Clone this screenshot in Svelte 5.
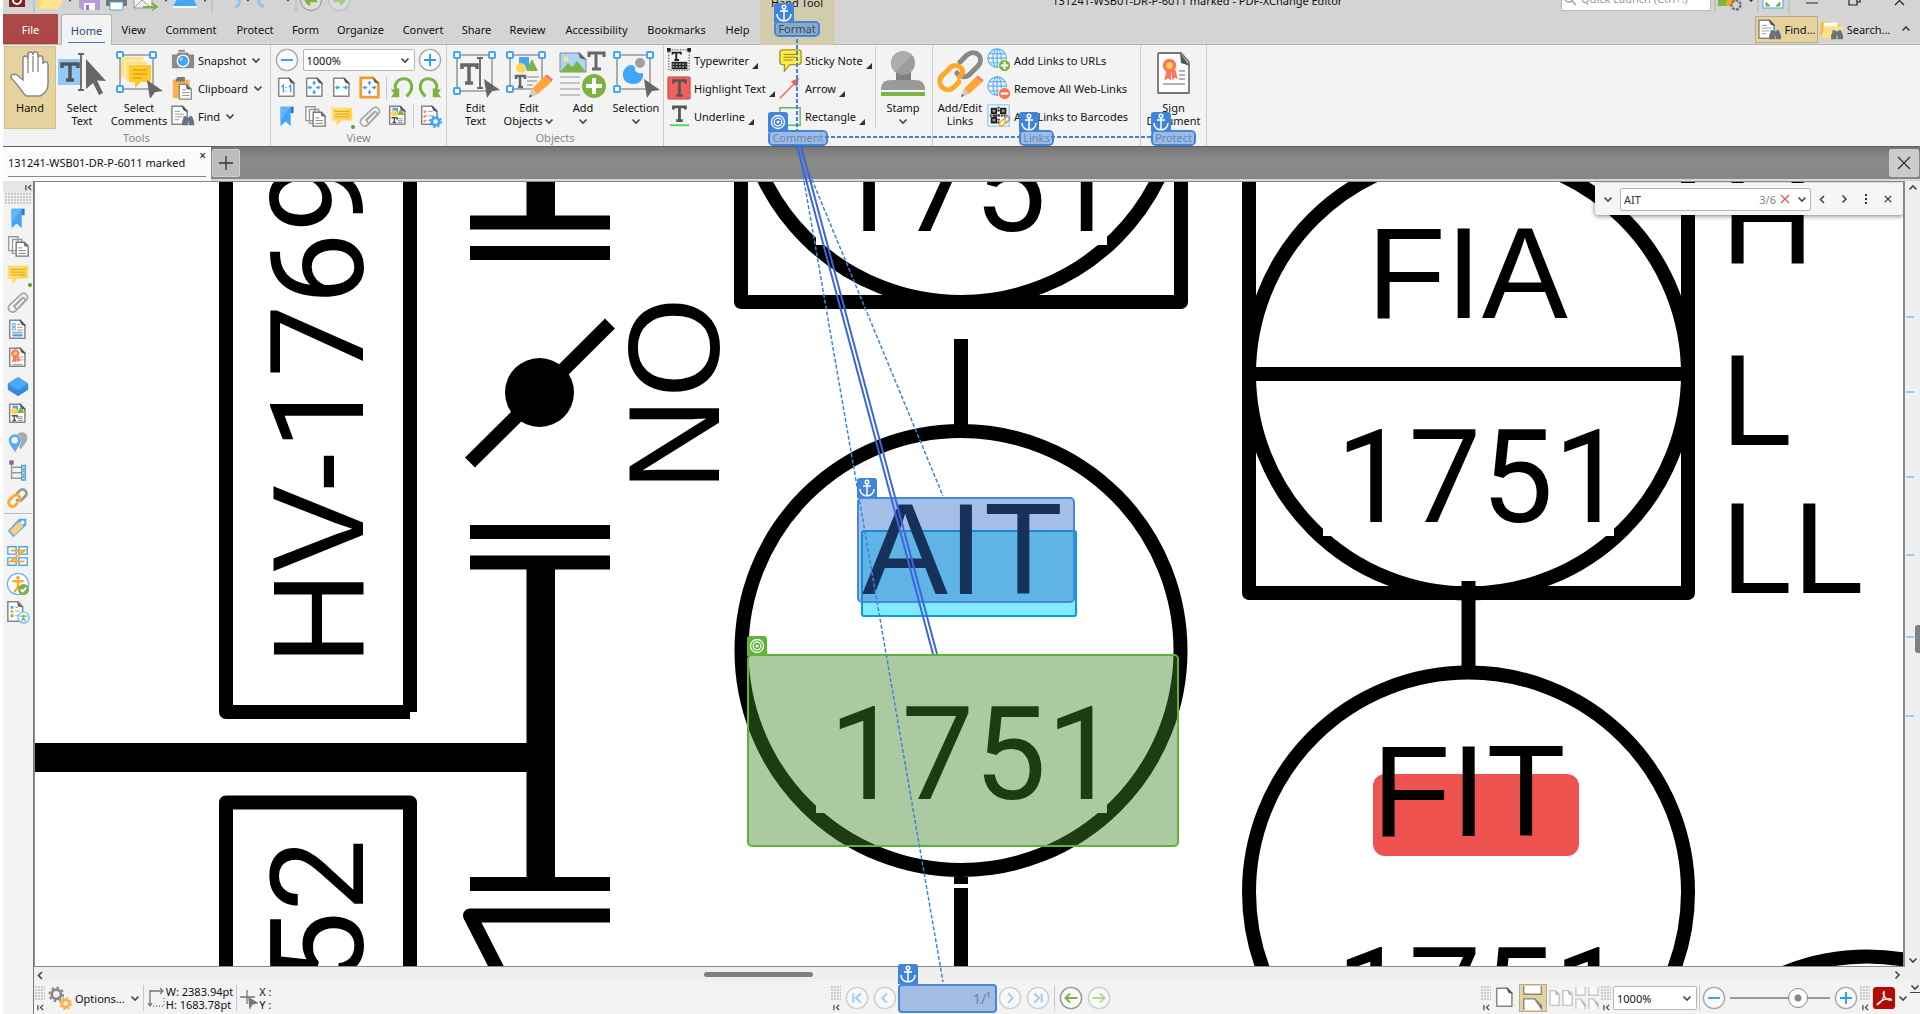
<script>
  const tabs = ['View', 'Comment', 'Protect', 'Form', 'Organize', 'Convert', 'Share', 'Review', 'Accessibility', 'Bookmarks', 'Help'];
  const panes = [
    ['bookmark', 'Bookmarks'], ['pages', 'Thumbnails'], ['note', 'Comments'], ['clip', 'Attachments'],
    ['fields', 'Fields'], ['sign', 'Signatures'], ['layers', 'Layers'], ['content', 'Content'],
    ['pins', 'Destinations'], ['tree', 'Structure'], ['link', 'Links']
  ];
  const accessPanes = [['tag', 'Tags'], ['order', 'Order'], ['person', 'Accessibility check'], ['report', 'Report']];
  const ticks = [317, 392, 477, 555, 637, 716];
  let zoom = $state('1000%');
  let slider = $state(72);
  let query = $state('AIT');
</script>

{#snippet sheet()}
  <g><path d="M4 2.5h11.5l5 5V22H4z" fill="#fff" stroke="#858585" stroke-width="1.6" stroke-linejoin="round" /><path d="M15 2l6 6-4-1z" fill="#555" stroke="#555" /></g>
{/snippet}

{#snippet binoculars()}
  <g fill="#6b7178"><path d="M14 14h4v9h-6v-4zM19 14h4l2 5v4h-6z" /><path d="M16 15h5v4h-5z" /><path d="M13.500 13h3v2h-3zM20 13h3v2h-3z" fill="#3e8fd0" /></g>
{/snippet}

{#snippet cursor(x, y)}
  <path transform="translate({x} {y})" d="M0 0l16 11-7 1 -1 0-5 7z" fill="#666" />
{/snippet}

{#snippet handles(x2, y2)}
  <g fill="none"><path d="M5 5H{x2}V{y2}H5z" stroke="#999" stroke-width="1.6" />
    <g fill="#fff" stroke="#42a5f5" stroke-width="2"><rect x="2" y="2" width="6" height="6" rx="1" /><rect x={x2 - 3} y="2" width="6" height="6" rx="1" /><rect x="2" y={y2 - 3} width="6" height="6" rx="1" /></g></g>
{/snippet}

{#snippet chain()}
  <g fill="none" stroke-width="3" stroke-linecap="round"><path d="M12 7l3-3a4.200 4.200 0 0 1 6 6l-4 4a4.200 4.200 0 0 1-5 .5" stroke="#999" /><path d="M12 18l-2 2a4.200 4.200 0 0 1-6-6l4-4a4.200 4.200 0 0 1 6 0 4 4 0 0 1 0 5" stroke="#ffa726" /></g>
{/snippet}

{#snippet pencil()}
  <g><path d="M0 20l3-8L14 1l6 5L8 17z" fill="#ffa53a" /><path d="M14 1l2-1.500 5.500 4.500L20 6z" fill="#ff7058" /><path d="M0 20l3-8 5 5z" fill="#d7ccc0" /><path d="M0 20l1-3 2 2z" fill="#666" /></g>
{/snippet}

{#snippet rosette()}
  <g><path d="M9 12l-1.500 7 2.500-1.500 2 1.500v-7zM12 12l1 7 1.500-2 2 1-1.500-6z" fill="#ff7558" /><circle cx="11" cy="9" r="4.500" fill="#ff7558" /><circle cx="11" cy="9" r="2.200" fill="#ffd54f" /></g>
{/snippet}

{#snippet globe()}
  <g fill="none" stroke="#5cb0f2" stroke-width="1.300"><circle cx="11" cy="11" r="10" /><ellipse cx="11" cy="11" rx="4.500" ry="10" /><path d="M11 1v20M1 11h20M2.500 6h17M2.500 16h17" /></g>
{/snippet}

{#snippet icon(name)}
  <svg class="ic" viewBox="0 0 26 26" aria-hidden="true">
    {#if name === 'bookmark'}
      <path d="M6 3h14v5h-3v16l-5.500-5L6 24z" fill="#42a5f5" /><path d="M6 18V3h11z" fill="#64b5f6" /><path d="M17 3h3v7h-3z" fill="#2b7fc9" />
    {:else if name === 'pages'}
      <g fill="#fff" stroke="#999" stroke-width="1.500"><path d="M3 18V3h10v15zM7 21V6h10v15z" /><path d="M11 9h9l4 4v11H11z" stroke="#777" /></g><path d="M13.500 15h4m-4 3h8m-8 3h8" stroke="#777" /><path d="M19 9l5 5-4-1z" fill="#555" />
    {:else if name === 'note'}
      <path d="M2 4h22v14H12l-5 6v-6H2z" fill="#ffd54f" /><path d="M2 18V4h20L12 18z" fill="#ffe07a" opacity=".7" /><path d="M5 8h16M5 11h16M5 14h16" stroke="#e0a92c" stroke-width="1.300" />
    {:else if name === 'clip'}
      <path d="M8 17L17 8c2-2 5 1 3 3L11 21c-5 5-11-1-7-6L16 4c4-4 10 2 6 6l-8 8c-3 3-6 0-3-3l7-7" fill="none" stroke="#a6a6a6" stroke-width="1.800" transform="translate(0 1)" />
    {:else if name === 'fields'}
      {@render sheet()}<path d="M7 6h3v3H7zM7 10h3v3H7z" fill="#fff" stroke="#42a5f5" /><path d="M12 7h3m-3 3h6m-6 3h6M7 15.500h11M7 17.500h11" stroke="#888" /><path d="M7 19h11" stroke="#42a5f5" stroke-width="2" />
    {:else if name === 'sign'}
      {@render sheet()}<g transform="translate(-1 -1)">{@render rosette()}</g><path d="M15 12h4m-4 3h4M7 20h11" stroke="#999" />
    {:else if name === 'layers'}
      <path d="M2 10v7l11 7 11-7v-7z" fill="#3993e0" /><path d="M13 3l11 7-11 7L2 10z" fill="#4dabf5" /><path d="M2 13l11 7 11-7M2 16l11 6 11-6" fill="none" stroke="#2d83cf" />
    {:else if name === 'content'}
      {@render sheet()}<path d="M7 4h6v6H7z" fill="#42a5f5" /><path d="M12 12l4-7 4 7z" fill="#7cb342" /><circle cx="9" cy="10" r="3.500" fill="#ffd54f" /><path d="M6 15h6v2m-3-2v5m-2 0h4" stroke="#555" stroke-width="1.600" fill="none" /><path d="M13 16h5m-5 2h5m-5 2h5" stroke="#888" />
    {:else if name === 'pins'}
      <path d="M12 5c4-5 12-2 11 4 0 4-5 9-7 12l-2-3c3-4 3-9 1-11z" fill="#aaa" /><path d="M10 24C7 19 3 15 3 11a6.500 6.500 0 0 1 13 0c0 4-4 8-6 13z" fill="#55acf3" /><circle cx="9.500" cy="11" r="3.500" fill="#f3f3f3" />
    {:else if name === 'tree'}
      <path d="M6 5v17h11M6 16h11M6 10h11" fill="none" stroke="#999" stroke-width="1.500" /><path d="M4 3h4v4H4z" fill="#e53935" stroke="#42a5f5" /><g fill="#ffd54f" stroke="#42a5f5" stroke-width="1.500"><path d="M17 8h4v4h-4zM17 14h4v4h-4zM17 20h4v4h-4z" /></g>
    {:else if name === 'link'}
      <g transform="translate(0 1)">{@render chain()}</g>
    {:else if name === 'tag'}
      <path d="M22 3h-8L2 16l6 7L22 10z" fill="#55acf3" /><path d="M14 6l5 5-10 10-5-5z" fill="#ffcc80" /><circle cx="18" cy="7" r="2" fill="#fff" />
    {:else if name === 'order'}
      <g fill="#fff" stroke="#42a5f5" stroke-width="1.500"><path d="M2 3h9v8H2zM14 3h9v8h-9zM2 15h9v8H2zM14 15h9v8h-9z" /></g><path d="M5 7h15L5 19h15" fill="none" stroke="#ffa726" stroke-width="2.200" />
    {:else if name === 'person'}
      <circle cx="13" cy="13" r="11.500" fill="#fff" stroke="#64b5f6" stroke-width="1.300" /><circle cx="13" cy="6" r="2" fill="#ffa726" /><path d="M7 10h12M13 10v6l-4 6M13 15l3 5" stroke="#ffa726" stroke-width="2.500" fill="none" /><circle cx="19" cy="19" r="6" fill="#7cb342" /><path d="M16 19l2 2 4-4" fill="none" stroke="#fff" stroke-width="2" />
    {:else if name === 'report'}
      <path d="M2 2h11l5 5v16H2z" fill="#fff" stroke="#858585" stroke-width="1.600" /><path d="M12 2l6 6-5-1z" fill="#555" /><path d="M5 8h3" stroke="#42a5f5" stroke-width="3" /><path d="M5 12.500h3" stroke="#ffa726" stroke-width="3" /><path d="M5 17h3" stroke="#7cb342" stroke-width="3" /><path d="M10 8h3m-3 4h5m-5 5h3" stroke="#999" /><circle cx="19" cy="19" r="6" fill="#fff" stroke="#64b5f6" stroke-width="1.300" /><path d="M15 17.500h8M19 16v3l-2 4m2-4l2 4" stroke="#66bb6a" stroke-width="1.500" fill="none" />
    {:else if name === 'camera'}
      <path d="M1 7h5l2-2h10l2 2h5v15H1z" fill="#8a8a8a" /><path d="M8 2h7v2H8z" fill="#8a8a8a" /><circle cx="13" cy="14" r="7" fill="#fff" /><circle cx="13" cy="14" r="5.500" fill="#42a5f5" /><circle cx="11" cy="12" r="2" fill="#8fcbfa" />
    {:else if name === 'paste'}
      <path d="M2 4h18v20H2z" fill="#ffb04d" /><path d="M7 1h8v5H5V4z" fill="#777" /><path d="M9 9h8l5 5v11H9z" fill="#fff" stroke="#888" stroke-width="1.400" /><path d="M12 15h4m-4 3h8m-8 3h8" stroke="#888" /><path d="M16 9l6 6-5-1z" fill="#555" />
    {:else if name === 'find'}
      <g transform="translate(-3 0)">{@render sheet()}</g><path d="M4 8h6M4 11h10M4 14h8M4 17h5" stroke="#999" />{@render binoculars()}
    {:else if name === 'folder'}
      <path d="M1 4h9l2 3h10v15H1z" fill="#f9bd2c" /><path d="M4 5h15v8H4z" fill="#fff" /><path d="M1 22L5 9h21l-4 13z" fill="#ffe082" />{@render binoculars()}
    {:else if name === 'minus'}
      <circle cx="13" cy="13" r="11.500" fill="#fafafa" stroke="#a8a8a8" stroke-width="1.500" /><path d="M6.500 13h13" stroke="#2f9bf0" stroke-width="2" />
    {:else if name === 'plus'}
      <circle cx="13" cy="13" r="11.500" fill="#fafafa" stroke="#a8a8a8" stroke-width="1.500" /><path d="M6.500 13h13M13 6.500v13" stroke="#2f9bf0" stroke-width="2" />
    {:else if name === 'actual'}
      {@render sheet()}<path d="M7 12l2-2v8M15 12l2-2v8M12 12v1m0 3v1" stroke="#42a5f5" stroke-width="1.500" fill="none" />
    {:else if name === 'fitpage'}
      {@render sheet()}<path d="M12 6v4m0 5v4M6 12.500h4m4 0h4M10.500 8L12 6l1.500 2M10.500 17l1.500 2 1.500-2M8 11l-2 1.500L8 14M16 11l2 1.500-2 1.500" stroke="#42a5f5" stroke-width="1.500" fill="none" />
    {:else if name === 'fitwidth'}
      {@render sheet()}<path d="M6.500 12.500H11m3 0h4.500M8.500 10.500l-2 2 2 2M16.500 10.500l2 2-2 2" stroke="#42a5f5" stroke-width="1.500" fill="none" />
    {:else if name === 'fitvisible'}
      <path d="M3 2h13l6 6v15H3z" fill="#fff" stroke="#f59a2c" stroke-width="3" /><path d="M16 1l7 7-5-1z" fill="#555" /><path d="M12.500 6v4m0 5v4M6 12.500h4m5 0h4M11 8l1.500-2L14 8M11 17l1.500 2 1.500-2M8 11l-2 1.500L8 14M17 11l2 1.500-2 1.500" stroke="#42a5f5" stroke-width="1.500" fill="none" />
    {:else if name === 'rotleft'}
      <path d="M8 20C2 9 9 3 15 3c9 0 12 11 3 19" fill="none" stroke="#7cb342" stroke-width="3.400" /><path d="M1 14l4 1 5-2v10H1l3-4z" fill="#7cb342" />
    {:else if name === 'rotright'}
      <path d="M18 20C24 9 17 3 11 3 2 3-1 14 8 22" fill="none" stroke="#7cb342" stroke-width="3.400" /><path d="M25 14l-4 1-5-2v10h9l-3-4z" fill="#7cb342" />
    {:else if name === 'tasks'}
      {@render sheet()}<path d="M6 8l1 1 2-2M6 13l1 1 2-2M6 18l1 1 2-2" stroke="#ff7058" fill="none" stroke-width="1.500" /><path d="M11 8h5m-5 5h5m-5 5h3" stroke="#999" /><circle cx="19" cy="19" r="4" fill="#fff" stroke="#42a5f5" stroke-width="3" /><circle cx="19" cy="19" r="6" fill="none" stroke="#42a5f5" stroke-width="2" stroke-dasharray="2.400 2.300" />
    {:else if name === 'typewriter'}
      <path d="M2 2h22v22H2z" fill="none" stroke="#333" stroke-dasharray="1.500 1.500" /><path d="M0 0h4v4H0zM22 0h4v4h-4z" fill="#222" /><path d="M6 7V5h9v2M10 5v8M8 13h5" stroke="#222" stroke-width="2" fill="none" /><path d="M5 15h17v8H5z" fill="#222" /><path d="M6 17.500h15M6 20.500h15" stroke="#fff" stroke-dasharray="2 1.500" />
    {:else if name === 'hltext'}
      <rect x="1" y="1" width="24" height="24" rx="1" fill="#f0615c" stroke="#c93d3b" /><path d="M7 8V5h13v3M13.500 5v16M10 21h7" fill="none" stroke="#555" stroke-width="3" />
    {:else if name === 'underline'}
      <path d="M7 6V3h13v3M13.500 3v15M10 18h7" fill="none" stroke="#555" stroke-width="3" /><path d="M3 23h21" stroke="#4ade50" stroke-width="2" />
    {:else if name === 'sticky'}
      <path d="M5 2h17a3 3 0 0 1 3 3v10a3 3 0 0 1-3 3h-9l-6 7v-7H5a3 3 0 0 1-3-3V5a3 3 0 0 1 3-3z" fill="#fdec45" stroke="#a99529" stroke-width="1.500" /><path d="M6 7h14M6 10h14M6 13h10" stroke="#8c7a1c" />
    {:else if name === 'arrow'}
      <path d="M2 24L20 6" stroke="#f0615c" stroke-width="1.500" /><path d="M14 6l9-4-3 10z" fill="#f0615c" />
    {:else if name === 'rect'}
      <path d="M2 4h22v19H2z" fill="none" stroke="#67b168" stroke-width="1.500" />
    {:else if name === 'addlink'}
      {@render globe()}<circle cx="19" cy="19" r="6.500" fill="#7cb342" stroke="#f3f3f3" /><path d="M15 19h8M19 15v8" stroke="#fff" stroke-width="2.200" />
    {:else if name === 'rmlink'}
      {@render globe()}<circle cx="19" cy="19" r="6.500" fill="#ff7250" stroke="#f3f3f3" /><path d="M15 19h8" stroke="#fff" stroke-width="2.400" />
    {:else if name === 'qr'}
      <path d="M1 1h23v23H1z" fill="#fff" stroke="#90caf9" stroke-width="1.500" /><path d="M5 5h5v5H5zM15 5h5v5h-5zM5 15h5v5H5z" fill="#999" stroke="#222" stroke-width="2" /><path d="M12.500 3v6m0 2v3M3 12.500h19M12.500 16v6M8 13h3" stroke="#333" stroke-width="2.500" stroke-dasharray="2 1" /><g transform="translate(12 12) scale(.56)">{@render chain()}</g>
    {:else if name === 'gears'}
      <g fill="none"><circle cx="9" cy="9" r="5" stroke="#888" stroke-width="3" /><circle cx="9" cy="9" r="7.500" stroke="#888" stroke-width="2" stroke-dasharray="2.900 3" /><circle cx="19" cy="19" r="4" stroke="#ffb14d" stroke-width="3" /><circle cx="19" cy="19" r="6" stroke="#ffb14d" stroke-width="2" stroke-dasharray="2.400 2.300" /></g>
    {:else if name === 'single'}
      {@render sheet()}
    {:else if name === 'contin'}
      <path d="M3 0v9h19V0M3 26V14h12l7 7v5" fill="#fff" stroke="#858585" stroke-width="1.500" /><path d="M14 14l8 8v3z" fill="#555" />
    {:else if name === 'two'}
      <path d="M1 5h6l4 4v12H1zM15 5h6l4 4v12H15z" fill="#fff" stroke="#c4c4c4" stroke-width="1.500" /><path d="M7 5l4 5-4-1zM21 5l4 5-4-1z" fill="#aaa" />
    {:else if name === 'four'}
      <path d="M1 1v9h10V1M15 1v9h10V1M1 25V14h5l5 5v6M15 25V14h5l5 5v6" fill="#fafafa" stroke="#c9c9c9" stroke-width="1.500" /><path d="M5 14l6 6v3zM19 14l6 6v3z" fill="#aaa" />
    {:else if name === 'first' || name === 'prev' || name === 'next' || name === 'last' || name === 'back' || name === 'forward'}
      <circle cx="13" cy="13" r="11.500" fill="#f8f8f8" stroke={name === 'back' ? '#999' : '#cfcfcf'} stroke-width="1.600" />
      {#if name === 'first'}<path d="M9 8v10M17 8l-5 5 5 5" fill="none" stroke="#9dcef8" stroke-width="2.200" />
      {:else if name === 'prev'}<path d="M15 8l-5 5 5 5" fill="none" stroke="#9dcef8" stroke-width="2.200" />
      {:else if name === 'next'}<path d="M11 8l5 5-5 5" fill="none" stroke="#9dcef8" stroke-width="2.200" />
      {:else if name === 'last'}<path d="M17 8v10M9 8l5 5-5 5" fill="none" stroke="#9dcef8" stroke-width="2.200" />
      {:else if name === 'back'}<path d="M20 13H7m5-5l-5 5 5 5" fill="none" stroke="#7cb342" stroke-width="2.200" />
      {:else}<path d="M6 13h13m-5-5l5 5-5 5" fill="none" stroke="#b5d697" stroke-width="2.200" />{/if}
    {:else if name === 'acrobat'}
      <rect x="1" y="1" width="24" height="24" rx="4" fill="#b30b00" /><path d="M5 20c5-1 9-8 8-14-3 2 3 11 8 9-2-3-12 0-15 5z" fill="none" stroke="#fff" stroke-width="1.500" />
    {/if}
  </svg>
{/snippet}

{#snippet big(name)}
  <svg class="bigic" viewBox="0 0 48 48" aria-hidden="true">
    {#if name === 'hand'}
      <path d="M17 46c-4-4-10-14-15-18-1-3 3-5 6-3l6 5V9c0-4 5-4 5 0V5c0-4 5-4 5 0v-1c0-3 5-3 5 1v3c0-3 5-3 5 1v5c0-3 5-3 5 1v19c0 6-4 10-8 12z" transform="translate(3 0)" fill="#fff" stroke="#888" stroke-width="1.500" /><path d="M22 9v14M27 6v16M32 8v14" stroke="#888" stroke-width="1.300" />
    {:else if name === 'seltext'}
      <rect x="0" y="9" width="24" height="26" fill="#90caf9" /><path d="M4 18v-4h16v4M12 14v16M8 30h8" stroke="#555" stroke-width="3.500" fill="none" /><path d="M23 4v36M20 4h6M20 40h6" stroke="#666" stroke-width="1.800" /><path d="M28 9l20 22-9-.5L45 43l-4 2-6-12-7 6z" fill="#666" />
    {:else if name === 'selcom'}
      {@render handles(38, 39)}<path d="M6 7h22v4H11v16H6z" fill="#ffe082" /><path d="M10 11h22v4H15v16h-5z" fill="#ffe082" stroke="#f3f3f3" /><path d="M14 15h22v17H26l-6 6v-6h-6z" fill="#ffca28" /><path d="M18 20h14M18 24h14M18 28h9" stroke="#c99413" />{@render cursor(32, 30)}
    {:else if name === 'edittext'}
      {@render handles(40, 41)}<path d="M10 19v-4h15v4M17 15v18M13 33h8" stroke="#666" stroke-width="3.500" fill="none" /><path d="M28 8v30M25 8h6M25 38h6" stroke="#666" stroke-width="1.800" />{@render cursor(32, 29)}
    {:else if name === 'editobj'}
      {@render handles(37, 39)}<path d="M14 7h10v12H14z" fill="#42a5f5" /><path d="M21 21l6-12 6 12z" fill="#7cb342" /><circle cx="16" cy="18" r="5" fill="#ffd54f" /><path d="M11 29v-3h9v3M15 26v11M13 37h5" stroke="#666" stroke-width="2.500" fill="none" /><path d="M22 27h12M22 31h10M22 35h6" stroke="#aaa" stroke-width="1.500" /><g transform="translate(24 25) scale(1.120)">{@render pencil()}</g>
    {:else if name === 'add'}
      <path d="M1 3h20l6 6v13H1z" fill="#a9d5f7" stroke="#8a8a8a" /><path d="M1 22l8-9 4 4 5-6 9 11z" fill="#7cb342" /><circle cx="7" cy="9" r="2.500" fill="#ffe082" /><path d="M19 2l8 8-6-2z" fill="#555" /><path d="M30 7V3h15v4M37 3v16M33 19h9" stroke="#666" stroke-width="3" fill="none" /><path d="M1 27h20M1 33h20M1 39h20M1 45h20" stroke="#b5b5b5" stroke-width="1.600" /><circle cx="35" cy="36" r="12" fill="#7cb342" /><path d="M27 36h16M35 28v16" stroke="#fff" stroke-width="4" />
    {:else if name === 'selection'}
      {@render handles(38, 39)}<path d="M11 22c3-7 9-9 12-5-1 5 3 7 8 6 1 8-5 11-10 11-7 0-11-5-10-12z" fill="#42a5f5" /><circle cx="28" cy="13" r="5" fill="#a0a0a0" />{@render cursor(32, 29)}
    {:else if name === 'stamp'}
      <path d="M17 20h15v13H17z" fill="#808080" /><circle cx="24" cy="13" r="12" fill="#9c9c9c" /><path d="M16 22A12 12 0 0 1 33 5z" fill="#adadad" /><path d="M2 40c0-7 3-10 11-10h22c8 0 11 3 11 10z" fill="#9a9a9a" /><path d="M2 42h44v4H2z" fill="#7cb342" />
    {:else if name === 'addedit'}
      <g fill="none" stroke-width="5" stroke-linecap="round"><path d="M24 12l7-7c9-7 18 3 11 11l-7 7c-4 5-11 5-14 0" stroke="#888" /><path d="M23 32l-5 5c-8 8-19-3-12-11l7-7c4-5 10-4 13 0 2 4-1 7-3 8" stroke="#ffa726" /></g><g transform="translate(25 26) scale(1.050)">{@render pencil()}</g>
    {:else if name === 'signdoc'}
      <path d="M9 3h22l8 9v31H8V4z" fill="#fff" stroke="#777" stroke-width="1.800" stroke-linejoin="round" /><path d="M30 3l10 13-9-3z" fill="#555" /><g transform="translate(3 2) scale(1.500)">{@render rosette()}</g><path d="M29 21h6M29 25h6M29 29h6M13 34h22" stroke="#999" stroke-width="1.500" />
    {/if}
  </svg>
{/snippet}

{#snippet chev(dir)}
  <svg class="chev {dir}" viewBox="0 0 10 10" aria-hidden="true"><path d="M1.500 3.500L5 7l3.500-3.500" /></svg>
{/snippet}

{#snippet badge(kind, x, y)}
  <svg class="badge" {x} {y} width="20" height="20" viewBox="0 0 20 20" aria-hidden="true">
    <path d="M0 20V3a3 3 0 0 1 3-3h14a3 3 0 0 1 3 3v17z" fill={kind === 'green' ? '#5fb336' : '#4285d8'} />
    {#if kind === 'anchor'}
      <g fill="none" stroke="#fff" stroke-width="1.500"><circle cx="10" cy="4" r="1.800" /><path d="M10 6v12M6 8h8M3 11c0 9 14 9 14 0" /></g>
    {:else}
      <g fill="none" stroke="#fff" stroke-width="1.300"><circle cx="10" cy="10" r="6.500" /><circle cx="10" cy="10" r="3.800" /></g><circle cx="10" cy="10" r="1.500" fill="#fff" />
    {/if}
  </svg>
{/snippet}

{#snippet grip()}
  <span class="grip"><i></i><svg viewBox="0 0 8 8" aria-hidden="true"><path d="M1 1v6M7 1L4 4l3 3" /></svg></span>
{/snippet}

{#snippet row(name, label, mode)}
  <button class="row">{@render icon(name)}<span>{label}</span>{#if mode === 'chev'}{@render chev('down')}{:else if mode === 'tri'}<i class="tri"></i>{/if}</button>
{/snippet}

{#snippet bigBtn(name, one, two, menu)}
  <button class="bigbtn" class:on={name === 'hand'}>{@render big(name)}<span>{one}</span><span>{two}{#if menu}{@render chev('down')}{/if}</span></button>
{/snippet}

<div class="app">
  <header>
    <div class="title">
      <svg class="quick" viewBox="0 0 350 14" aria-hidden="true">
        <rect x="6" y="-10" width="16" height="17" fill="#7d2020" /><circle cx="14" cy="0" r="4" fill="none" stroke="#fff" stroke-width="2" />
        <path d="M31 0v12M209 0v12M293 0v12" stroke="#b0b0b0" />
        <path d="M35-4h20v7l-4 6H35z" fill="#ffd45c" /><path d="M35 9l5-10h21l-6 10z" fill="#ffe48f" />
        <path d="M76-5h21v15H79l-3-3z" fill="#b39ddb" /><path d="M81 3h11v7H81z" fill="#fff" /><path d="M83 5h3v5h-3z" fill="#9575cd" />
        <path d="M103-4h21v10h-21z" fill="#757575" /><path d="M107 2h13v8h-13z" fill="#fff" stroke="#42a5f5" />
        <path d="M131-4h18v12h-18z" fill="#f3f3f3" stroke="#999" /><path d="M131 8l8-8 7 6" fill="none" stroke="#999" /><path d="M140 7h13M149 3l5 4-5 3" stroke="#7cb342" stroke-width="2" fill="none" />
        <path d="M170 6l5-8h15l4 8z" fill="#42a5f5" /><path d="M170 6h24v2h-24z" fill="#fff" />
        <path d="M220-1c14-6 22 4 12 8" fill="none" stroke="#8fc5f2" stroke-width="3" /><path d="M269-1c-14-6-18 4-8 8" fill="none" stroke="#8fc5f2" stroke-width="3" />
        <circle cx="308" cy="0" r="10.500" fill="#ddd" stroke="#8d8d8d" /><path d="M303 1h11M307-3l-4 4 4 4" fill="none" stroke="#7cb342" stroke-width="2.500" />
        <circle cx="336" cy="0" r="10.500" fill="#ddd" stroke="#b5b5b5" /><path d="M330 1h11M337-3l4 4-4 4" fill="none" stroke="#a5cc80" stroke-width="2.500" />
        <path d="M65-1h4l-2 3zM161-1h4l-2 3zM200-1h4l-2 3zM243-1h4l-2 3zM283-1h4l-2 3z" fill="#444" />
      </svg>
      <h1>131241-WSB01-DR-P-6011 marked - PDF-XChange Editor</h1>
      <div class="titleright">
        <label class="launch"><svg viewBox="0 0 12 12" aria-hidden="true"><circle cx="5" cy="4" r="4" /><path d="M8 7l4 4" /></svg><input aria-label="Quick Launch" placeholder="Quick Launch (Ctrl+.)" /></label>
        <svg class="wins" viewBox="0 0 200 14" aria-hidden="true">
          <path d="M1 0v13M44 0v13M75 0v14" stroke="#b5b5b5" /><path d="M4-4h14l-6 10H4z" fill="#7cb342" /><path d="M14-3h12l-8 9h-6z" fill="#ffa726" /><circle cx="22" cy="5" r="4.500" fill="#d5d5d5" stroke="#777" stroke-width="2.500" stroke-dasharray="3 1" /><path d="M35 0h4l-2 2z" fill="#333" />
          <rect x="49" y="-8" width="20" height="16" fill="#fff" stroke="#42a5f5" /><path d="M52 6V2l4 4zM66 6V2l-4 4z" fill="#7cb342" stroke="#7cb342" />
          <path d="M92 3h12M135-3h8v8h-8zM138-3V-6h8v8h-3M181 5l9-9M190 5l-9-9" fill="none" stroke="#222" stroke-width="1.200" />
        </svg>
      </div>
    </div>
    <nav class="tabs">
      <button class="file">File</button>
      <button class="home">Home</button>
      {#each tabs as tab}<button>{tab}</button>{/each}
      <div class="context"><span class="ctx">Hand Tool</span><button class="mark">Format{@render badge('anchor')}</button></div>
      <span></span>
      <button class="tool on">{@render icon('find')}Find...</button>
      <button class="tool">{@render icon('folder')}Search...</button>
      <button class="collapse" aria-label="Collapse ribbon">{@render chev('up')}</button>
    </nav>
  </header>

  <div class="ribbon">
    <section class="group">
      <div class="body tools">
        {@render bigBtn('hand', 'Hand', '')}
        {@render bigBtn('seltext', 'Select', 'Text')}
        {@render bigBtn('selcom', 'Select', 'Comments')}
        <div class="rows">
          {@render row('camera', 'Snapshot', 'chev')}
          {@render row('paste', 'Clipboard', 'chev')}
          {@render row('find', 'Find', 'chev')}
        </div>
      </div>
      <h2>Tools</h2>
    </section>
    <section class="group">
      <div class="view">
        <div class="line"><button aria-label="Zoom out">{@render icon('minus')}</button>
          <span class="combo"><select aria-label="Zoom" bind:value={zoom}><option>1000%</option><option>400%</option></select>{@render chev('down')}</span>
          <button aria-label="Zoom in">{@render icon('plus')}</button></div>
        <div class="line">
          {#each ['actual', 'fitpage', 'fitwidth', 'fitvisible'] as n}<button aria-label={n}>{@render icon(n)}</button>{/each}
          <i class="vr"></i>
          {#each ['rotleft', 'rotright'] as n}<button aria-label={n}>{@render icon(n)}</button>{/each}
        </div>
        <div class="line">
          {#each ['bookmark', 'pages', 'note', 'clip', 'content'] as n}<button class:dot={n === 'note'} aria-label={n}>{@render icon(n)}</button>{/each}
          <i class="vr"></i>
          <button aria-label="tasks">{@render icon('tasks')}</button>
        </div>
      </div>
      <h2>View</h2>
    </section>
    <section class="group">
      <div class="body objects">
        {@render bigBtn('edittext', 'Edit', 'Text')}
        {@render bigBtn('editobj', 'Edit', 'Objects', true)}
        {@render bigBtn('add', 'Add', '', true)}
        {@render bigBtn('selection', 'Selection', '', true)}
      </div>
      <h2>Objects</h2>
    </section>
    <section class="group">
      <div class="body comment">
        <div class="rows">
          {@render row('typewriter', 'Typewriter', 'tri')}
          {@render row('hltext', 'Highlight Text', 'tri')}
          {@render row('underline', 'Underline', 'tri')}
        </div>
        <div class="rows">
          {@render row('sticky', 'Sticky Note', 'tri')}
          {@render row('arrow', 'Arrow', 'tri')}
          {@render row('rect', 'Rectangle', 'tri')}
        </div>
        {@render bigBtn('stamp', 'Stamp', '', true)}
      </div>
      <h2><span class="mark">Comment{@render badge('target')}</span></h2>
    </section>
    <section class="group">
      <div class="body links">
        {@render bigBtn('addedit', 'Add/Edit', 'Links')}
        <div class="rows">
          {@render row('addlink', 'Add Links to URLs')}
          {@render row('rmlink', 'Remove All Web-Links')}
          {@render row('qr', 'Add Links to Barcodes')}
        </div>
      </div>
      <h2><span class="mark">Links{@render badge('anchor')}</span></h2>
    </section>
    <section class="group">
      <div class="body">{@render bigBtn('signdoc', 'Sign', 'Document')}</div>
      <h2><span class="mark">Protect{@render badge('anchor')}</span></h2>
    </section>
  </div>

  <div class="doctabs">
    <div class="doctab"><span>131241-WSB01-DR-P-6011 marked</span><button aria-label="Close tab">×</button></div>
    <button class="square" aria-label="New tab"><svg viewBox="0 0 16 16"><path d="M8 1v14M1 8h14" /></svg></button>
    <button class="square end" aria-label="Close document"><svg viewBox="0 0 16 16"><path d="M2 2l12 12M14 2L2 14" /></svg></button>
  </div>

  <div class="main">
    <aside>
      <div class="asidetop"><svg viewBox="0 0 8 8" aria-hidden="true"><path d="M1 1v6M7 1L4 4l3 3" /></svg></div>
      <i class="dots"></i>
      {#each panes as [n, label]}<button class:dot={n === 'note'} aria-label={label}>{@render icon(n)}</button>{/each}
      <hr />
      {#each accessPanes as [n, label]}<button aria-label={label}>{@render icon(n)}</button>{/each}
    </aside>
    <div class="work">
      <div class="viewrow">
        <div class="canvas">
          <svg class="drawing" role="img" aria-label="Piping diagram">
            <g transform="translate(-35 -182)">
              <g fill="none" stroke="#000" stroke-width="14" stroke-linejoin="round">
                <path d="M410 170V712M410 712H226V170" />
                <path d="M226 980V802.500H410V980" />
                <path d="M741 170V302H1181V170" /><circle cx="961" cy="82.500" r="219.500" />
                <path d="M1249 170V593H1688V170M1249 374H1688" /><circle cx="1468.500" cy="374" r="219.500" />
                <circle cx="961" cy="650.500" r="219.500" /><circle cx="1468.500" cy="892" r="219.500" /><circle cx="1867" cy="1176" r="219.500" />
                <path d="M961 339V431M961 877V884M961 888V980M1468.500 581V672" />
                <path d="M470 222.500H610M470 253H610M470 532H610M470 562.500H610M470 884H610M610 915.500H470L503 980" />
                <path d="M610 323.500L470 462.500" />
              </g>
              <circle cx="539.500" cy="392.500" r="34.500" />
              <path d="M526.500 170H555V216H526.500zM526.500 569H555V877H526.500zM30 743H527V772H30z" />
              <g fill="#fff"><path d="M816 210H1107V245H816zM1323 500H1614V536H1323zM816 780H1107V813H816z" /></g>
              <rect x="1373" y="774" width="206" height="82" rx="12" fill="#ef5350" />
              <rect x="862" y="531" width="214" height="85" rx="2" fill="#82eaff" stroke="#00a0de" stroke-width="2" />
              <g class="cad">
                <text class="num" x="829" y="231">1751</text><text class="num" x="829" y="799">1751</text><text x="862" y="594">AIT</text>
                <text x="1367" y="318">FIA</text><text class="num" x="1336" y="522">1751</text><text x="1372" y="836">FIT</text><text class="num" x="1336" y="1040">1751</text>
                <text x="1721" y="263">H</text><text x="1721" y="445">L</text><text x="1721" y="593">LL</text>
                <text transform="translate(363 665) rotate(-90)">HV-<tspan class="num">1769</tspan></text>
                <text class="num" transform="translate(363 984) rotate(-90)">52</text>
                <text transform="translate(719 491) rotate(-90)">NO</text>
              </g>
            </g>
          </svg>
          <form class="findbar" onsubmit={(e) => e.preventDefault()}>
            <button aria-label="Options">{@render chev('down')}</button>
            <span class="findbox"><input aria-label="Find" bind:value={query} /><span>3/6</span><svg viewBox="0 0 10 10" aria-hidden="true"><path d="M1 1l8 8M9 1L1 9" /></svg>{@render chev('down')}</span>
            <button aria-label="Previous">{@render chev('left')}</button>
            <button aria-label="Next">{@render chev('right')}</button>
            <button aria-label="More"><svg class="more" viewBox="0 0 4 12"><path d="M1 1h2v2H1zM1 5h2v2H1zM1 9h2v2H1z" /></svg></button>
            <button aria-label="Close"><svg class="cross" viewBox="0 0 10 10"><path d="M1 1l8 8M9 1L1 9" /></svg></button>
          </form>
        </div>
        <div class="vbar">
          {@render chev('up')}
          <svg aria-hidden="true"><g transform="translate(0 -193)">{#each ticks as t}<path d="M1 {t}h8" />{/each}<rect x="10" y="625" width="8" height="28" rx="3" /></g></svg>
          {@render chev('down')}
        </div>
      </div>
      <div class="hbar">{@render chev('left')}<i></i>{@render chev('right')}</div>
      <footer>
        <div class="part left">
          {@render grip()}
          <button class="opt">{@render icon('gears')}Options...{@render chev('down')}</button>
          <i class="vr"></i>
          <svg class="dim" viewBox="0 0 18 22" aria-hidden="true"><path d="M3 3v16M3 4h12M1 16l2 3 2-3M13 1l3 3-3 3" /><path d="M6 19h11V9" stroke-dasharray="1 2" /></svg>
          <span class="size"><span>W: 2383.94pt</span><span>H: 1683.78pt</span></span>
          <i class="vr"></i>
          <svg class="dim" viewBox="0 0 18 22" aria-hidden="true"><path d="M7 3v14M0 10h15" /><path d="M9 11l8 5-5 1-2 4z" fill="#777" /></svg>
          <span class="size"><span>X :</span><span>Y :</span></span>
        </div>
        <div class="part mid">
          {@render grip()}
          <button aria-label="First page">{@render icon('first')}</button>
          <button aria-label="Previous page">{@render icon('prev')}</button>
          <label class="pagebox"><input aria-label="Page" value="1/¹" />{@render badge('anchor')}</label>
          <button aria-label="Next page">{@render icon('next')}</button>
          <button aria-label="Last page">{@render icon('last')}</button>
          <i class="vr"></i>
          <button aria-label="Back">{@render icon('back')}</button>
          <button aria-label="Forward">{@render icon('forward')}</button>
        </div>
        <div class="part right">
          {@render grip()}
          <button aria-label="Single page">{@render icon('single')}</button>
          <button class="on" aria-label="Continuous">{@render icon('contin')}</button>
          <button aria-label="Two pages">{@render icon('two')}</button>
          <button aria-label="Two pages continuous">{@render icon('four')}</button>
          {@render grip()}
          <span class="combo"><select aria-label="Page zoom" bind:value={zoom}><option>1000%</option><option>400%</option></select>{@render chev('down')}</span>
          <i class="vr"></i>
          <button aria-label="Zoom out">{@render icon('minus')}</button>
          <input type="range" aria-label="Zoom level" min="0" max="100" bind:value={slider} />
          <button aria-label="Zoom in">{@render icon('plus')}</button>
          {@render grip()}
          <button aria-label="Acrobat">{@render icon('acrobat')}</button>
          {@render chev('down')}
          <span class="tail">{@render chev('down')}</span>
        </div>
      </footer>
    </div>
  </div>

  <svg class="anchors" aria-hidden="true">
    <rect x="858" y="498" width="216" height="104" rx="4" fill="#3370c9" fill-opacity=".447" stroke="#4587d9" stroke-width="2" />
    {@render badge('anchor', 857, 478)}
    <rect x="748" y="655" width="430" height="191" rx="4" fill="#44872b" fill-opacity=".443" stroke="#5fb336" stroke-width="2" />
    {@render badge('green', 747, 636)}
    <g fill="none" stroke="#3f83dc" stroke-width="2" stroke-dasharray="4 2">
      <path d="M797 39V131M825 137H1020M1051 137H1152" />
      <path d="M798 146L943 982M798 146L943 496" stroke-width="1.500" />
    </g>
    <path d="M797 146L933 654M801 146L937 654" stroke="#3d66dc" stroke-width="2" />
  </svg>
</div>

<style>
  :global(body) { margin: 0; background: #fff; }
  .app { position: relative; display: flex; flex-direction: column; height: 100vh; padding-left: 3px; box-sizing: border-box; overflow: hidden; font: 11px/13px "Noto Sans", "Open Sans", sans-serif; color: #111; }
  button, input, select { font: inherit; color: inherit; margin: 0; }
  button { background: none; border: 0; padding: 0; display: flex; align-items: center; justify-content: center; white-space: nowrap; box-sizing: border-box; }
  i { display: block; flex: none; }
  .ic { width: 24px; height: 24px; flex: none; display: block; overflow: hidden; }
  .bigic { width: 48px; height: 48px; display: block; }
  .chev { width: 10px; height: 10px; flex: none; fill: none; stroke: #444; stroke-width: 1.600; }
  .chev.up { transform: rotate(180deg); }
  .chev.left { transform: rotate(90deg); }
  .chev.right { transform: rotate(-90deg); }
  .vr { width: 1px; align-self: stretch; background: #c8c8c8; }

  header { background: #d4d4d4; border-bottom: 1px solid #b5b5b5; flex: none; }
  .title { display: grid; grid-template-columns: 31fr auto 17fr; height: 14px; overflow: hidden; align-items: start; }
  .quick { width: 350px; height: 14px; }
  h1 { margin: 0; font-size: 11px; line-height: 2px; height: 14px; font-weight: 400; text-align: center; width: 300px; white-space: nowrap; }
  .titleright { display: flex; justify-content: flex-end; align-items: flex-end; height: 14px; }
  .launch { display: flex; gap: 5px; align-items: flex-end; width: 150px; height: 24px; margin-bottom: 3px; padding: 0 2px 4px; box-sizing: border-box; background: #fff; border: 1px solid #b8b8b8; border-radius: 2px; }
  .launch svg { width: 12px; height: 12px; fill: none; stroke: #999; stroke-width: 1.400; }
  .launch input { border: 0; padding: 0; width: 126px; height: 15px; background: none; }
  .launch input::placeholder { color: #999; opacity: 1; }
  .wins { width: 200px; height: 14px; margin-left: 3px; margin-right: 6px; }

  .tabs { display: grid; grid-template-columns: 55px 54px 43px 72px 56px 45px 65px 60px 47px 55px 83px 77px 45px 74px 1fr 63px 74px 28px; height: 30px; }
  .tabs > button { height: 30px; }
  .tabs .file { background: linear-gradient(#ab4a4a, #b04545); color: #fff; }
  .tabs .home { background: #f3f3f3; border: 1px solid #b5b5b5; border-bottom: 0; border-radius: 3px 3px 0 0; color: #1d4b78; margin-left: 3px; position: relative; height: 31px; }
  .home::after { content: ""; position: absolute; left: 6px; right: 6px; bottom: 2px; border-bottom: 1px solid #4a7dab; }
  .context { margin-top: -14px; background: #d2ccaf; border: 1px solid #dacb8b; border-width: 0 1px; display: flex; flex-direction: column; align-items: center; }
  .ctx { height: 10px; line-height: 5px; margin-bottom: 13px; }
  .mark { position: relative; background: #4285d880; box-shadow: 0 0 0 2px #4285d8; border-radius: 3px; padding: 0 2px; line-height: 12px; height: 12px; display: block; color: #33496b; }
  .mark .badge { position: absolute; left: -2px; bottom: 100%; }
  .tabs .tool { gap: 3px; height: 27px; margin-top: 2px; border: 1px solid transparent; }
  .tabs .tool.on { background: #e6d29c; border-color: #b8ad8b; }

  .ribbon { display: flex; flex: none; height: 101px; background: #f3f3f3; border-bottom: 1px solid #5e5e5e; }
  .group { border-right: 1px solid #ccc; display: flex; flex-direction: column; box-sizing: border-box; flex: none; }
  .group:nth-child(1) { width: 268px; }
  .group:nth-child(2) { width: 176px; }
  .group:nth-child(3) { width: 217px; }
  .group:nth-child(4) { width: 269px; }
  .group:nth-child(5) { width: 208px; }
  .group:nth-child(6) { width: 66px; }
  .group h2 { margin: 0; font: inherit; color: #888; text-align: center; line-height: 12px; display: flex; justify-content: center; }
  .group .mark { color: #6f87b5; }
  .body, .view { height: 87px; box-sizing: border-box; }
  .body { display: grid; padding: 1px 1px 3px; }
  .tools { grid-template-columns: 52px 52px 62px 1fr; }
  .objects { grid-template-columns: 55px 52px 56px 50px; }
  .comment { grid-template-columns: 111px 98px 1fr; padding-left: 2px; }
  .links { grid-template-columns: 52px 1fr; }
  .bigbtn { flex-direction: column; justify-content: flex-start; padding-top: 3px; height: 83px; border: 1px solid transparent; }
  .bigbtn span { display: flex; height: 13px; align-items: center; gap: 2px; }
  .bigbtn .bigic { margin-bottom: 3px; }
  .bigbtn.on { background: #e6d29c; border-color: #cfc092; }
  .rows { display: flex; flex-direction: column; gap: 4px; padding: 2px 1px; }
  .comment .bigbtn { border-left-color: #ccc; }
  .row { gap: 3px; height: 24px; justify-content: flex-start; }
  .row .chev { margin-left: 2px; }
  .tri { border: 3px solid #333; border-top-color: transparent; border-left-color: transparent; width: 0; height: 0; align-self: flex-end; margin: 0 0 3px 0; box-sizing: border-box; }
  .view { padding: 3px 4px 0; display: flex; flex-direction: column; gap: 4px; }
  .line { display: flex; align-items: center; justify-content: space-between; height: 24px; }
  .line > button { width: 24px; }
  .combo { display: flex; align-items: center; background: #fff; border: 1px solid #b5b5b5; border-radius: 2px; box-sizing: border-box; padding-right: 4px; height: 22px; width: 112px; }
  .combo select { appearance: none; border: 0; background: none; flex: 1; padding: 0 3px; min-width: 0; outline: 0; }
  .dot { position: relative; }
  .dot::after { content: ""; position: absolute; right: -1px; bottom: -1px; width: 4px; height: 4px; border-radius: 50%; background: #4fa12c; }

  .doctabs { display: flex; flex: none; height: 34px; box-sizing: border-box; background: linear-gradient(#767676, #8c8c8c 40%, #868686); border-bottom: 2px solid #d8d8d8; }
  .doctab { width: 208px; box-sizing: border-box; background: #fbfbfb; display: flex; justify-content: space-between; padding: 0 5px; position: relative; height: 34px; line-height: 31px; font-size: 11px; }
  .doctab::after { content: ""; position: absolute; left: 5px; right: 5px; bottom: 4px; border-bottom: 1px solid #888; }
  .doctab button { height: 16px; font-size: 12px; }
  .square { width: 28px; height: 28px; margin: 2px 1px; background: #bcbcbc; border: 1px solid #cdcdcd; border-radius: 2px; }
  .square.end { margin-left: auto; width: 30px; background: #cbcbcb; }
  .square svg { width: 16px; height: 16px; fill: none; stroke: #333; stroke-width: 1.300; }

  .main { display: flex; flex: 1; min-height: 0; }
  aside { width: 31px; flex: none; background: #f3f3f3; border-right: 1px solid #777; box-sizing: border-box; display: flex; flex-direction: column; align-items: center; }
  .asidetop { align-self: stretch; background: #e6e6e6; height: 12px; display: flex; justify-content: flex-end; align-items: center; padding-right: 1px; flex: none; }
  .asidetop svg, .grip svg { width: 7px; height: 7px; fill: none; stroke: #444; stroke-width: 1.400; }
  .dots, .grip i { background: radial-gradient(circle at 1px 1px, #aaa 0.500px, transparent 1px) 0 0 / 3px 3px; }
  .dots { width: 26px; height: 11px; margin-bottom: 2px; }
  aside button { width: 26px; height: 24px; margin-bottom: 4px; flex: none; }
  aside hr { width: 28px; border: 0; border-top: 1px solid #bbb; margin: -1px 0 2px; }

  .work { flex: 1; min-width: 0; display: flex; flex-direction: column; }
  .viewrow { display: flex; flex: 1; min-height: 0; }
  .canvas { position: relative; flex: 1; min-width: 0; background: #fff; border: 1px solid #888; border-width: 1px 2px 1px 1px; box-sizing: border-box; overflow: hidden; }
  .drawing { display: block; width: 100%; height: 100%; }
  .cad { font: 129px "Liberation Sans", sans-serif; }
  .cad .num { font-family: Roboto, sans-serif; }
  .findbar { position: absolute; top: 1px; right: 0; width: 308px; height: 32px; box-sizing: border-box; display: grid; grid-template-columns: 25px 191px repeat(4, 22px); align-items: center; background: #f5f5f5; border-radius: 3px; box-shadow: 0 1px 5px #0008; }
  .findbox { display: flex; align-items: center; gap: 4px; height: 23px; box-sizing: border-box; background: #fff; border: 1px solid #b5b5b5; border-radius: 2px; padding: 0 3px; color: #888; }
  .findbox input { border: 0; outline: 0; flex: 1; min-width: 0; padding: 0; background: none; color: #333; }
  .findbox svg:not(.chev) { width: 10px; height: 10px; stroke: #e05555; stroke-width: 1.300; margin-right: 3px; }
  .findbar .more { width: 4px; height: 12px; fill: #333; }
  .cross { width: 8px; height: 8px; stroke: #333; stroke-width: 1.500; fill: none; }

  .vbar { width: 15px; flex: none; background: #efefef; display: flex; flex-direction: column; align-items: center; padding: 2px 0; }
  .vbar > svg:not(.chev) { flex: 1; width: 15px; min-height: 0; fill: #808080; stroke: #4aa5f0; }
  .vbar rect { stroke: none; }
  .hbar { height: 15px; flex: none; background: #efefef; display: grid; grid-template-columns: 669px 109px 1fr; align-items: center; padding: 0 18px 0 1px; }
  .hbar i { height: 5px; border-radius: 3px; background: #808080; }
  .hbar .chev.right { justify-self: end; }
  footer { height: 32px; flex: none; background: #f3f3f3; display: grid; grid-template-columns: 797px 1fr auto; }
  .part { display: flex; align-items: center; gap: 4px; }
  .part > .vr { margin: 3px 0; }
  .left { padding-left: 1px; gap: 3px; }
  .grip { width: 10px; height: 25px; flex: none; display: flex; flex-direction: column; align-items: center; justify-content: space-between; }
  .grip i { width: 10px; height: 15px; }
  .opt { gap: 3px; }
  .opt .chev { margin-left: 2px; }
  .dim { width: 18px; height: 22px; fill: none; stroke: #777; stroke-width: 1.300; margin-right: -2px; }
  .size span { display: block; }
  .pagebox { position: relative; width: 99px; height: 29px; margin: 0 -3px; }
  .pagebox input { width: 99px; height: 29px; box-sizing: border-box; border: 2px solid #4587d9; border-radius: 4px; background: #a2bce4; color: #6f7ea0; text-align: right; padding: 0 4px; font-size: 14px; display: block; }
  .pagebox .badge { position: absolute; left: 0; bottom: 100%; }
  .part.right { gap: 2px; }
  .right .on { background: #e6d29c; border: 1px solid #b8ad8b; height: 28px; width: 28px; }
  .right .combo { width: 84px; height: 24px; }
  .right input { appearance: none; width: 100px; height: 20px; background: linear-gradient(#999, #999) center / 100% 2px no-repeat; margin: 0 2px; }
  .right input::-webkit-slider-thumb { appearance: none; width: 20px; height: 20px; border-radius: 50%; border: 1px solid #888; background: radial-gradient(circle, #888 3px, #fff 4px); }
  .tail { width: 10px; align-self: start; display: flex; justify-content: center; background: #efefef; }
  .tail .chev { border-bottom: 1px solid #444; }
  .anchors { position: absolute; inset: 0; width: 100%; height: 100%; pointer-events: none; }
</style>
